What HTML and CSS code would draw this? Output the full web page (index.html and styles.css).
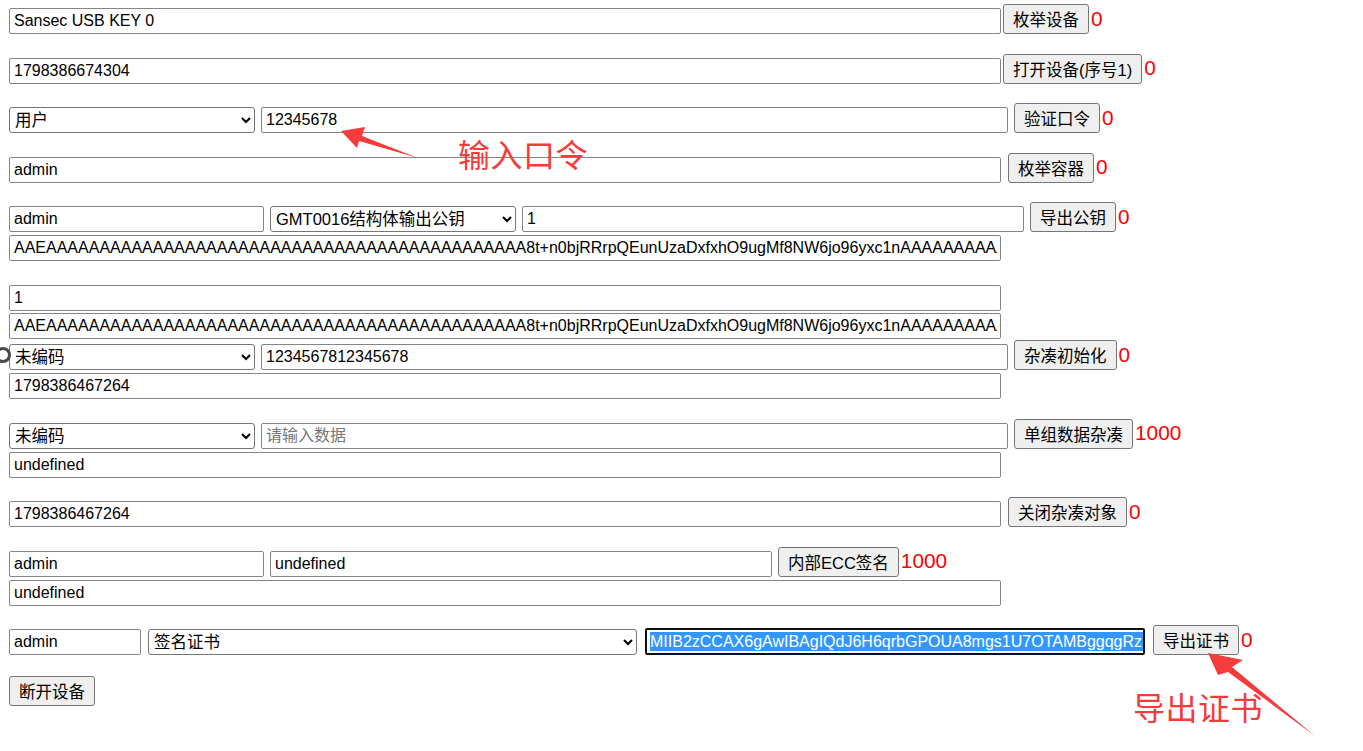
FILE: index.html
```html
<!DOCTYPE html>
<html lang="zh-CN">
  <head>
    <meta charset="UTF-8" />
    <meta name="viewport" content="width=device-width, initial-scale=1.0" />
    <title>USB KEY 测试</title>
    <link rel="stylesheet" href="styles.css">
  </head>
  <body>
    <div class="page">
      <!-- device -->
      <div class="row first tight">
        <input class="wide" type="text" value="Sansec USB KEY 0" />
        <span class="act"><button>枚举设备</button><span class="rv">0</span></span>
      </div>
      <div class="row tight">
        <input class="wide" type="text" value="1798386674304" />
        <span class="act"><button>打开设备(序号1)</button><span class="rv">0</span></span>
      </div>

      <!-- pin -->
      <div class="row">
        <select class="sel-short"><option>用户</option></select>
        <input class="mid" type="text" value="12345678" />
        <span class="act"><button>验证口令</button><span class="rv">0</span></span>
      </div>

      <div class="row g7">
        <input class="wide" type="text" value="admin" />
        <span class="act"><button>枚举容器</button><span class="rv">0</span></span>
      </div>

      <!-- export public key -->
      <div class="row">
        <input class="name" type="text" value="admin" />
        <select class="sel-key"><option>GMT0016结构体输出公钥</option></select>
        <input class="half" type="text" value="1" />
        <span class="act"><button>导出公钥</button><span class="rv">0</span></span>
      </div>
      <div class="row sub">
        <input class="wide" type="text" value="AAEAAAAAAAAAAAAAAAAAAAAAAAAAAAAAAAAAAAAAAAAAAAAA8t+n0bjRRrpQEunUzaDxfxhO9ugMf8NW6jo96yxc1nAAAAAAAAAAAAAAAAAAAAAAAAAAAAAAAAAAAAAAAAAAAxT2kq" />
      </div>

      <div class="row wide-gap">
        <input class="wide" type="text" value="1" />
      </div>
      <div class="row sub2">
        <input class="wide" type="text" value="AAEAAAAAAAAAAAAAAAAAAAAAAAAAAAAAAAAAAAAAAAAAAAAA8t+n0bjRRrpQEunUzaDxfxhO9ugMf8NW6jo96yxc1nAAAAAAAAAAAAAAAAAAAAAAAAAAAAAAAAAAAAAAAAAAAxT2kq" />
      </div>

      <!-- digest -->
      <div class="row close">
        <span class="ring"></span>
        <select class="sel-short"><option>未编码</option></select>
        <input class="mid" type="text" value="1234567812345678" />
        <span class="act"><button>杂凑初始化</button><span class="rv">0</span></span>
      </div>
      <div class="row sub">
        <input class="wide" type="text" value="1798386467264" />
      </div>

      <div class="row">
        <select class="sel-short"><option>未编码</option></select>
        <input class="mid" type="text" placeholder="请输入数据" />
        <span class="act"><button>单组数据杂凑</button><span class="rv">1000</span></span>
      </div>
      <div class="row sub">
        <input class="wide" type="text" value="undefined" />
      </div>

      <div class="row g7">
        <input class="wide" type="text" value="1798386467264" />
        <span class="act"><button>关闭杂凑对象</button><span class="rv">0</span></span>
      </div>

      <!-- sign -->
      <div class="row">
        <input class="name" type="text" value="admin" />
        <input class="half" type="text" value="undefined" />
        <span class="act"><button>内部ECC签名</button><span class="rv">1000</span></span>
      </div>
      <div class="row sub">
        <input class="wide" type="text" value="undefined" />
      </div>

      <!-- certificate -->
      <div class="row cert-row">
        <input class="short" type="text" value="admin" />
        <select class="sel-cert"><option>签名证书</option></select>
        <div class="cert"><span class="picked">MIIB2zCCAX6gAwIBAgIQdJ6H6qrbGPOUA8mgs1U7OTAMBggqgRzPVQGDdQUAMC4xCzAJ</span></div>
        <span class="act"><button>导出证书</button><span class="rv">0</span></span>
      </div>

      <div class="row last">
        <button>断开设备</button>
      </div>

      <!-- screenshot notes -->
      <div class="notes">
        <svg class="arrows" width="1363" height="751" viewBox="0 0 1363 751">
          <polygon points="341,131 365,127 362,136 418,158 359,141 357,148" />
          <polygon points="1208,653 1243,660 1232,667 1315,736 1228,672 1218,675" />
        </svg>
        <span class="note note-pin">输入口令</span>
        <span class="note note-cert">导出证书</span>
      </div>
    </div>
  </body>
</html>
```

FILE: styles.css
```css
body {
  margin: 0;
  background: #fff;
  font-family: "Liberation Sans", Arial, "Noto Sans CJK SC", sans-serif;
}

.page {
  position: relative;
  width: 1363px;
  height: 751px;
  box-sizing: border-box;
  padding: 4px 0 0 9px;
  overflow: hidden;
}

.row {
  position: relative;
  display: flex;
  align-items: flex-end;
  gap: 6px;
  margin-top: 19.5px;
}

.row.first { margin-top: 0; }
.row.tight { gap: 2px; }
.row.g7 { gap: 7px; }
.row.sub { margin-top: 3px; }
.row.sub2 { margin-top: 2px; }
.row.wide-gap { margin-top: 24px; }
.row.close { margin-top: 1px; }
.row.last { margin-top: 21px; }

input,
select,
button {
  font-family: "Liberation Sans", Arial, "Noto Sans CJK SC", sans-serif;
  font-size: 16px;
  color: #000;
  box-sizing: border-box;
  margin: 0;
}

input {
  height: 26px;
  padding: 0 3px 0 4px;
  border: 1px solid #858585;
  border-radius: 2px;
  background: #fff;
}

input::placeholder {
  color: #767676;
}

select {
  height: 26px;
  padding: 0 0 0 1px;
  border: 1px solid #767676;
  border-radius: 3px;
  background: #fff;
  font-size: 16.5px;
}

button {
  height: 30px;
  padding: 0 9px;
  border: 1px solid #767676;
  border-radius: 3px;
  background: #efefef;
  white-space: nowrap;
  font-size: 16.5px;
}

.wide { width: 992px; }
.mid { width: 747px; }
.half { width: 502px; }
.name { width: 255px; }
.short { width: 132px; }
.sel-short { width: 246px; }
.sel-key { width: 246px; }
.sel-cert { width: 489px; margin-left: 1px; }

.act {
  display: flex;
  align-items: center;
  gap: 2px;
}

.rv {
  color: #f00;
  font-size: 20.8px;
  line-height: 1;
}

.cert {
  width: 500px;
  height: 27px;
  margin: 0 2px;
  box-sizing: border-box;
  padding: 0 3px;
  border: 2px solid #101010;
  border-radius: 2px;
  display: flex;
  align-items: center;
  overflow: hidden;
  white-space: nowrap;
  font-size: 16px;
}

.picked {
  background: #3297fd;
  color: #fff;
  line-height: 19px;
}

.ring {
  position: absolute;
  left: -14px;
  top: 7px;
  width: 10px;
  height: 10px;
  border: 3px solid #4a4a4a;
  border-radius: 50%;
}

.notes {
  position: absolute;
  left: 0;
  top: 0;
  width: 1363px;
  height: 751px;
  pointer-events: none;
}

.arrows {
  position: absolute;
  left: 0;
  top: 0;
}

.arrows polygon {
  fill: #f53b3b;
}

.note {
  position: absolute;
  color: #f53b3b;
  font-family: "Noto Sans CJK SC", sans-serif;
  font-size: 32px;
  line-height: 1;
  letter-spacing: 0.5px;
}

.note-pin {
  left: 458px;
  top: 137px;
}

.note-cert {
  left: 1133px;
  top: 690px;
}
```
